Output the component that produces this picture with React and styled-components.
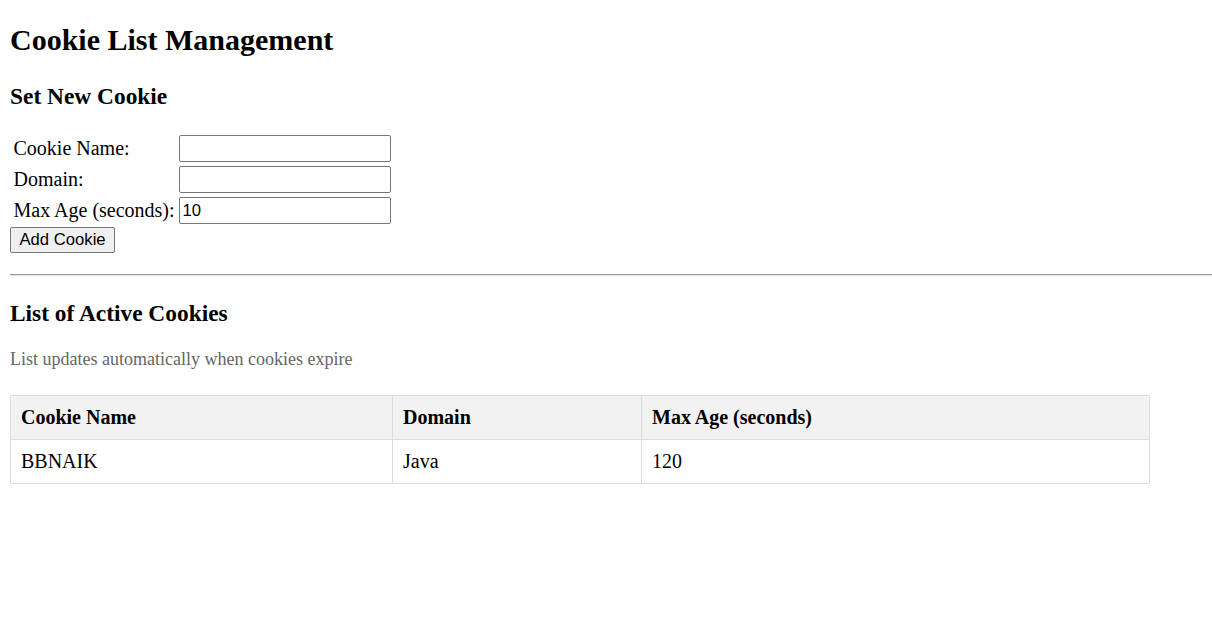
import React from "react";
import styled, { createGlobalStyle } from "styled-components";

const GlobalStyle = createGlobalStyle`
  html, body { background: #fff; }
  body {
    margin: 0;
    padding: 0 0 0 10px;
    font-family: "Liberation Serif", "Times New Roman", serif;
    font-size: 20px;
    color: #000;
  }
`;

const Page = styled.div`
  display: flow-root;
`;

const Title = styled.h2`
  font-size: 30px;
  font-weight: bold;
  margin: 23px 0 26px;
`;

const SectionTitle = styled.h3`
  font-size: 23.4px;
  font-weight: bold;
  margin: 23.4px 0 ${(p) => (p.$tight ? "22.6px" : "23.4px")};
`;

const Form = styled.form`
  margin: 0 0 21px;
`;

const FormTable = styled.table`
  border-spacing: 2px;
  margin: -1px 0 0 0.5px;
`;

const LabelCell = styled.td`
  padding: 1px;
  white-space: nowrap;
  vertical-align: middle;
`;

const FieldCell = styled.td`
  padding: 1px;
`;

const TextInput = styled.input`
  box-sizing: border-box;
  width: 212px;
  height: 27px;
  margin: 0;
  padding: 1px 3px;
  font-family: "Liberation Sans", Arial, sans-serif;
  font-size: 16.67px;
  color: #000;
  border: 1px solid #767676;
  border-radius: 2px;
  background: #fff;
  display: block;
`;

const Button = styled.button`
  box-sizing: border-box;
  display: block;
  height: 26px;
  margin: 0;
  padding: 0 8.5px;
  font-family: "Liberation Sans", Arial, sans-serif;
  font-size: 16.67px;
  color: #000;
  background: #efefef;
  border: 1px solid #767676;
  border-radius: 2px;
`;

const Rule = styled.hr`
  margin: 0 0 11px;
  height: 0;
  border: none;
  border-top: 1px solid #9a9a9a;
  border-bottom: 1px solid #e2e2e2;
`;

const Note = styled.p`
  color: #666;
  margin: 20px 0 25px;
  font-size: 18px;
`;

const DataTable = styled.table`
  width: 1139px;
  border-collapse: collapse;
  table-layout: fixed;
`;

const Col = styled.col`
  width: ${(p) => p.$w}px;
`;

const HeadCell = styled.th`
  text-align: left;
  font-weight: bold;
  padding: 10px;
  border: 1px solid #ddd;
  background: #f2f2f2;
  line-height: 23px;
`;

const Cell = styled.td`
  text-align: left;
  padding: 10px;
  border: 1px solid #ddd;
  line-height: 23px;
`;

const fields = [
  { label: "Cookie Name:", value: "" },
  { label: "Domain:", value: "" },
  { label: "Max Age (seconds):", value: "10" },
];

const cookies = [{ name: "BBNAIK", domain: "Java", maxAge: 120 }];

export default function App() {
  return (
    <Page>
      <GlobalStyle />
      <Title>Cookie List Management</Title>
      <SectionTitle>Set New Cookie</SectionTitle>
      <Form onSubmit={(e) => e.preventDefault()}>
        <FormTable>
          <tbody>
            {fields.map((f) => (
              <tr key={f.label}>
                <LabelCell>{f.label}</LabelCell>
                <FieldCell>
                  <TextInput type="text" defaultValue={f.value} />
                </FieldCell>
              </tr>
            ))}
          </tbody>
        </FormTable>
        <Button type="submit">Add Cookie</Button>
      </Form>
      <Rule />
      <SectionTitle $tight>List of Active Cookies</SectionTitle>
      <Note>List updates automatically when cookies expire</Note>
      <DataTable>
        <colgroup>
          <Col $w={382} />
          <Col $w={249} />
          <Col $w={508} />
        </colgroup>
        <thead>
          <tr>
            <HeadCell>Cookie Name</HeadCell>
            <HeadCell>Domain</HeadCell>
            <HeadCell>Max Age (seconds)</HeadCell>
          </tr>
        </thead>
        <tbody>
          {cookies.map((c) => (
            <tr key={c.name}>
              <Cell>{c.name}</Cell>
              <Cell>{c.domain}</Cell>
              <Cell>{c.maxAge}</Cell>
            </tr>
          ))}
        </tbody>
      </DataTable>
    </Page>
  );
}
